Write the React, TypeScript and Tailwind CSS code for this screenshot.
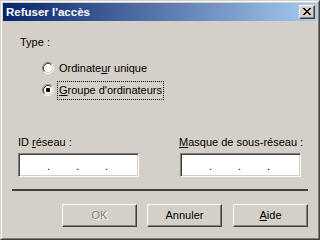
import React from "react";

const font = "font-['Liberation_Sans',Arial,sans-serif]";

function Radio({ checked }: { checked?: boolean }) {
  return (
    <svg width="12" height="12" viewBox="0 0 12 12" className="shrink-0">
      <circle cx="6" cy="6" r="4.5" fill="#ffffff" />
      <path d="M2.11 9.89 A5.5 5.5 0 0 1 9.89 2.11" stroke="#808080" strokeWidth="1" fill="none" />
      <path d="M9.89 2.11 A5.5 5.5 0 0 1 2.11 9.89" stroke="#ffffff" strokeWidth="1" fill="none" />
      <path d="M2.82 9.18 A4.5 4.5 0 0 1 9.18 2.82" stroke="#404040" strokeWidth="1" fill="none" />
      <path d="M9.18 2.82 A4.5 4.5 0 0 1 2.82 9.18" stroke="#d4d0c8" strokeWidth="1" fill="none" />
      {checked && <rect x="4" y="4" width="4" height="4" rx="1" fill="#000000" />}
    </svg>
  );
}

function CloseX() {
  const rows = [
    [0, 1, 6, 7],
    [1, 2, 5, 6],
    [2, 3, 4, 5],
    [3, 4],
    [2, 3, 4, 5],
    [1, 2, 5, 6],
    [0, 1, 6, 7],
  ];
  return (
    <svg width="8" height="7" viewBox="0 0 8 7" shapeRendering="crispEdges">
      {rows.map((r, y) => r.map((x) => <rect key={`${x}-${y}`} x={x} y={y} width="1" height="1" fill="#000" />))}
    </svg>
  );
}

function IpField() {
  return (
    <div className="w-[121px] h-[24px] bg-white border border-t-[#808080] border-l-[#808080] border-r-white border-b-white shadow-[inset_1px_1px_#404040,inset_-1px_-1px_#d4d0c8] flex items-center pl-[28px] text-[11px] leading-[13px] text-black">
      <span className="w-[29px] pt-[2px]">.</span>
      <span className="w-[29px] pt-[2px]">.</span>
      <span className="w-[29px] pt-[2px]">.</span>
    </div>
  );
}

function Button({ children, disabled }: { children: React.ReactNode; disabled?: boolean }) {
  return (
    <div
      className={`w-[75px] h-[23px] bg-[#d4d0c8] border border-t-white border-l-white border-r-[#404040] border-b-[#404040] shadow-[inset_-1px_-1px_#808080] flex items-center justify-center text-[11px] leading-[13px] ${
        disabled ? "text-[#808080] [text-shadow:1px_1px_#ffffff]" : "text-black"
      }`}
    >
      {children}
    </div>
  );
}

export default function App() {
  return (
    <div className={`w-[320px] h-[240px] ${font} border border-t-[#d4d0c8] border-l-[#d4d0c8] border-r-[#404040] border-b-[#404040]`}>
      <div className="w-full h-full border border-t-white border-l-white border-r-[#808080] border-b-[#808080] bg-[#d4d0c8] p-[1px] flex flex-col">
        {/* Title bar */}
        <div className="h-[18px] bg-[linear-gradient(to_right,#0a246a,#a6caf0)] flex items-center justify-between pl-[3px] pr-[2px] shrink-0">
          <span className="text-white font-bold text-[11.5px] leading-[13px]">Refuser l'accès</span>
          <div className="w-[16px] h-[14px] bg-[#d4d0c8] border border-t-white border-l-white border-r-[#404040] border-b-[#404040] shadow-[inset_-1px_-1px_#808080] flex items-center justify-center pb-[1px]">
            <CloseX />
          </div>
        </div>

        {/* Content */}
        <div className="flex flex-col text-[11px] leading-[13px] text-black">
          <div className="mt-[15px] pl-[17px]">Type :</div>

          <div className="mt-[8px] pl-[39px] flex flex-col">
            <div className="h-[22px] flex items-center">
              <Radio />
              <span className="ml-[4px] px-[1px]">
                Ordinate<span className="underline underline-offset-[1px]">u</span>r unique
              </span>
            </div>
            <div className="h-[22px] flex items-center">
              <Radio checked />
              <span className="ml-[3px] px-[1px] py-[2px] border border-dotted border-black">
                <span className="underline underline-offset-[1px]">G</span>roupe d'ordinateurs
              </span>
            </div>
          </div>

          <div className="mt-[35px] pl-[15px] flex">
            <div className="w-[162px] flex flex-col">
              <div>
                ID <span className="underline underline-offset-[1px]">r</span>éseau :
              </div>
              <div className="mt-[4px]">
                <IpField />
              </div>
            </div>
            <div className="flex flex-col">
              <div className="-ml-[1px]">
                <span className="underline underline-offset-[1px]">M</span>asque de sous-réseau :
              </div>
              <div className="mt-[4px]">
                <IpField />
              </div>
            </div>
          </div>

          <div className="mt-[12px] ml-[9px] w-[296px] h-[2px] bg-[#404040]" />

          <div className="mt-[13px] ml-[59px] flex gap-[10px]">
            <Button disabled>OK</Button>
            <Button>Annuler</Button>
            <div className="ml-[1px]">
              <Button>
                <span>
                  <span className="underline underline-offset-[1px]">A</span>ide
                </span>
              </Button>
            </div>
          </div>
        </div>
      </div>
    </div>
  );
}
